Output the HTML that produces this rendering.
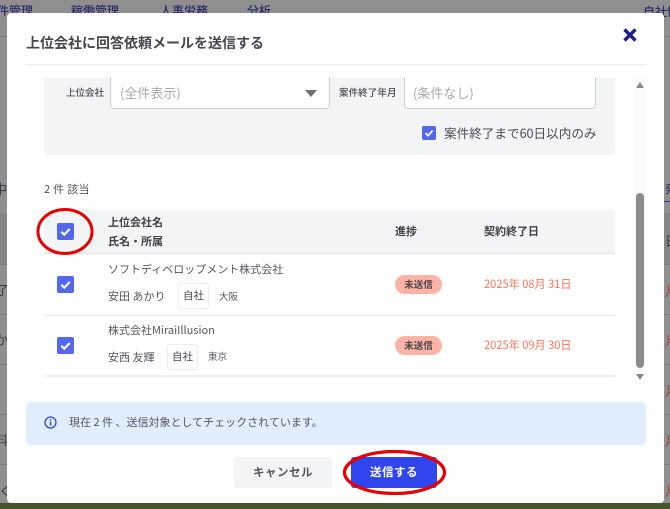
<!DOCTYPE html>
<html lang="ja"><head><meta charset="utf-8">
<style>
*{box-sizing:border-box}
html,body{margin:0;padding:0}
body{width:670px;height:509px;position:relative;overflow:hidden;background:#8f8f8f;font-family:"Noto Sans CJK JP","Liberation Sans",sans-serif;color:#4a4a55}
.a{position:absolute;white-space:nowrap;line-height:1}
.b{position:absolute}
.cb{position:absolute;width:17px;height:17px;background:#5468ee;border-radius:2px}
.cb svg{position:absolute;left:0;top:0}
.pill{position:absolute;left:395px;width:47px;height:19px;border-radius:10px;background:#ffb3a6;color:#444;font-size:9.5px;font-weight:700;text-align:center;line-height:19px}
.tag{position:absolute;width:31px;height:26px;border:1px solid #eceef0;border-radius:3px;background:#fff;font-size:10.5px;text-align:center;line-height:24px;color:#4a4a55}
.date{color:#ff7358;font-size:11.1px}
.n{font-size:12px;font-weight:500;color:#2b2b66}
.s{font-size:13px;color:#3a3a44}
.r{font-size:13px;color:#a8473a}
.l{position:absolute;height:1px;background:#7d7d7d}
</style></head><body>
<!-- backdrop -->
<div class="l" style="left:0;top:36px;width:670px"></div>
<div class="b" style="left:0;top:213px;width:670px;height:51px;background:#858585"></div>
<div class="b" style="left:664px;top:201px;width:6px;height:1px;background:#3a3a90"></div>
<div class="l" style="left:0;top:264px;width:670px"></div>
<div class="l" style="left:0;top:314px;width:670px"></div>
<div class="l" style="left:0;top:364px;width:670px"></div>
<div class="l" style="left:0;top:414px;width:670px"></div>
<div class="l" style="left:0;top:464px;width:670px"></div>
<div class="a n" style="left:-3px;top:5px">件管理</div>
<div class="a n" style="left:71px;top:5px">稼働管理</div>
<div class="a n" style="left:160px;top:5px">人事労務</div>
<div class="a n" style="left:247px;top:5px">分析</div>
<div class="a n" style="left:643px;top:6px">自社情報</div>
<div class="a s" style="left:-6px;top:182px">中</div>
<div class="a s" style="left:-4px;top:283px">了</div>
<div class="a s" style="left:-5px;top:333px">か</div>
<div class="a s" style="left:-5px;top:433px">料</div>
<div class="a s" style="left:-1px;top:484px">く</div>
<div class="a" style="left:665px;top:184px;font-size:11px;color:#2b2b66">発</div>
<div class="a s" style="left:665px;top:234px">日</div>
<div class="a r" style="left:665px;top:284px">月</div>
<div class="a r" style="left:665px;top:334px">月</div>
<div class="a r" style="left:665px;top:384px">月</div>
<div class="a r" style="left:665px;top:434px">月</div>
<div class="a r" style="left:665px;top:484px">月</div>
<div class="b" style="left:0;top:503px;width:670px;height:6px;background:#44562a"></div>

<!-- modal -->
<div class="b" style="left:7px;top:13px;width:657px;height:490px;background:#fff;border-radius:4px"></div>
<div class="a" style="left:26px;top:36px;font-size:14px;font-weight:700;color:#45454f">上位会社に回答依頼メールを送信する</div>
<svg class="b" style="left:622px;top:27px" width="16" height="16" viewBox="0 0 16 16"><path d="M2.5 2.5L13.5 13.5M13.5 2.5L2.5 13.5" stroke="#1d1d8a" stroke-width="3.4"/></svg>
<div class="b" style="left:26px;top:64px;width:620px;height:1px;background:#ececee"></div>

<!-- filter panel -->
<div class="b" style="left:44px;top:78px;width:571px;height:77px;background:#f3f4f6;border-radius:0 0 6px 6px"></div>
<div class="a" style="left:66px;top:88px;font-size:9.5px;font-weight:500;color:#4a4a55">上位会社</div>
<div class="b" style="left:110px;top:77px;width:220px;height:32px;background:#fff;border:1px solid #cfcfd2;border-top:0;border-radius:0 0 4px 4px"></div>
<div class="a" style="left:120px;top:86px;font-size:13px;color:#a9a9ae">(全件表示)</div>
<svg class="b" style="left:305px;top:90px" width="12" height="7"><path d="M0 0H12L6 7Z" fill="#6e6e73"/></svg>
<div class="a" style="left:339px;top:88px;font-size:9.6px;font-weight:500;color:#4a4a55">案件終了年月</div>
<div class="b" style="left:404px;top:77px;width:192px;height:32px;background:#fff;border:1px solid #cfcfd2;border-top:0;border-radius:0 0 4px 4px"></div>
<div class="a" style="left:413px;top:86px;font-size:13px;color:#a9a9ae">(条件なし)</div>
<div class="cb" style="left:422px;top:126px;width:14px;height:14px"><svg width="14" height="14"><path d="M3.5 7.2L6 9.6L10.6 4.6" fill="none" stroke="#fff" stroke-width="1.8"/></svg></div>
<div class="a" style="left:444px;top:127px;font-size:12.6px;color:#4a4a55">案件終了まで60日以内のみ</div>

<!-- scrollbar -->
<div class="b" style="left:634px;top:78px;width:12px;height:305px;background:#fbfbfb"></div>
<svg class="b" style="left:636px;top:82px" width="8" height="6"><path d="M4 0L8 6H0Z" fill="#8a8a8a"/></svg>
<div class="b" style="left:636px;top:193px;width:8px;height:175px;background:#8c8c8c;border-radius:4px"></div>
<svg class="b" style="left:636px;top:374px" width="8" height="6"><path d="M0 0H8L4 6Z" fill="#8a8a8a"/></svg>

<div class="a" style="left:44px;top:184px;font-size:11px;letter-spacing:.3px;color:#55555e">2 件 該当</div>

<!-- table -->
<div class="b" style="left:44px;top:210px;width:571px;height:43px;background:#f3f4f6"></div>
<div class="b" style="left:44px;top:253px;width:571px;height:1px;background:#e4e4e7"></div>
<div class="b" style="left:44px;top:315px;width:571px;height:1px;background:#ececee"></div>
<div class="b" style="left:44px;top:375px;width:571px;height:2px;background:#f0f0f2"></div>
<div class="a" style="left:108px;top:217px;font-size:11px;font-weight:700;color:#3f3f48">上位会社名</div>
<div class="a" style="left:108px;top:236px;font-size:11px;font-weight:700;color:#3f3f48">氏名・所属</div>
<div class="a" style="left:395px;top:226px;font-size:11px;font-weight:700;color:#3f3f48">進捗</div>
<div class="a" style="left:484px;top:226px;font-size:11px;font-weight:700;color:#3f3f48">契約終了日</div>

<div class="cb" style="left:57px;top:223px"><svg width="17" height="17"><path d="M4.3 8.8L7.3 11.6L12.7 6" fill="none" stroke="#fff" stroke-width="2.1"/></svg></div>
<div class="cb" style="left:57px;top:276px"><svg width="17" height="17"><path d="M4.3 8.8L7.3 11.6L12.7 6" fill="none" stroke="#fff" stroke-width="2.1"/></svg></div>
<div class="cb" style="left:57px;top:337px"><svg width="17" height="17"><path d="M4.3 8.8L7.3 11.6L12.7 6" fill="none" stroke="#fff" stroke-width="2.1"/></svg></div>

<div class="a" style="left:108px;top:264px;font-size:11px;color:#55555e">ソフトディベロップメント株式会社</div>
<div class="a" style="left:108px;top:291px;font-size:11px;color:#55555e">安田 あかり</div>
<div class="tag" style="left:178px;top:283px">自社</div>
<div class="a" style="left:219px;top:292px;font-size:9.5px;color:#55555e">大阪</div>
<div class="pill" style="top:275px">未送信</div>
<div class="a date" style="left:484px;top:279px">2025年 08月 31日</div>

<div class="a" style="left:108px;top:325px;font-size:11px;color:#55555e">株式会社MiraiIllusion</div>
<div class="a" style="left:108px;top:352px;font-size:11px;color:#55555e">安西 友輝</div>
<div class="tag" style="left:167px;top:344px">自社</div>
<div class="a" style="left:208px;top:352px;font-size:9.5px;color:#55555e">東京</div>
<div class="pill" style="top:336px">未送信</div>
<div class="a date" style="left:484px;top:340px">2025年 09月 30日</div>

<!-- info -->
<div class="b" style="left:26px;top:402px;width:620px;height:43px;background:#e1eefd;border-radius:4px"></div>
<svg class="b" style="left:44px;top:416px" width="13" height="13" viewBox="0 0 13 13"><circle cx="6.5" cy="6.5" r="5.5" fill="none" stroke="#3346e8" stroke-width="1.3"/><rect x="5.8" y="5.6" width="1.5" height="4" fill="#3346e8"/><rect x="5.8" y="3.2" width="1.5" height="1.5" fill="#3346e8"/></svg>
<div class="a" style="left:69px;top:417px;font-size:11px;color:#55555e">現在 2 件 、送信対象としてチェックされています。</div>

<!-- buttons -->
<div class="b" style="left:234px;top:457px;width:98px;height:31px;background:#f3f4f6;border-radius:3px"></div>
<div class="a" style="left:234px;top:467px;width:98px;text-align:center;font-size:11.5px;font-weight:700;color:#55555e;letter-spacing:.5px">キャンセル</div>
<div class="b" style="left:351px;top:457px;width:86px;height:31px;background:#3045ee;border-radius:3px"></div>
<div class="a" style="left:351px;top:467px;width:86px;text-align:center;font-size:11.5px;font-weight:700;color:#fff;letter-spacing:.5px">送信する</div>

<!-- red annotations -->
<svg class="b" style="left:0;top:0" width="670" height="509">
<ellipse cx="65" cy="231.5" rx="27" ry="22" fill="none" stroke="#e80000" stroke-width="3"/>
<ellipse cx="394.5" cy="472.5" rx="50" ry="21" fill="none" stroke="#e80000" stroke-width="3.2"/>
</svg>
</body></html>
